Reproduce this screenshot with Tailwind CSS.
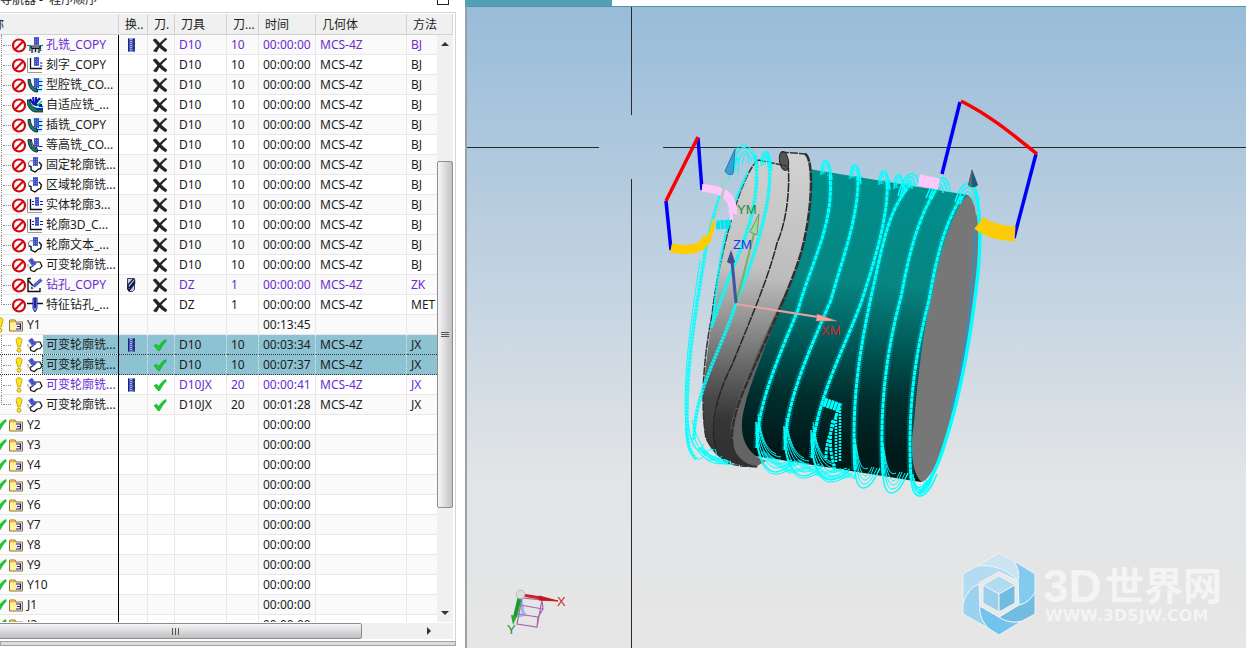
<!DOCTYPE html>
<html lang="zh-CN">

<head>
    <meta charset="UTF-8">
    <meta name="viewport" content="width=device-width, initial-scale=1.0">
    <title>工序导航器 - 程序顺序</title>
    <script src="https://cdn.jsdelivr.net/npm/@tailwindcss/browser@4"></script>
</head>

<body class="flex h-screen overflow-hidden bg-white font-['Noto_Sans','Noto_Sans_CJK_SC',sans-serif] text-xs text-[#1c1c1c]">

    <!-- icons -->
    <svg class="hidden">
        <symbol id="i-stop" viewBox="0 0 16 16">
            <circle cx="8" cy="8.500" r="6" fill="#fff" stroke="#cf0a10" stroke-width="2.200" />
            <path d="M4 12.500 12 4.500" stroke="#cf0a10" stroke-width="2.200" />
        </symbol>
        <symbol id="i-bang" viewBox="0 0 16 16">
            <path d="M8 .8c2.200 0 3.200 1.200 2.900 3L9.200 10H6.900L5.200 3.800C4.900 2 5.800 .8 8 .8z" fill="#ffe81a" stroke="#b79400" stroke-width=".8" />
            <circle cx="8" cy="13.300" r="2" fill="#ffe81a" stroke="#b79400" stroke-width=".8" />
        </symbol>
        <symbol id="i-check" viewBox="0 0 16 16">
            <path d="M2.200 8.600 4.600 7.200 6.800 9.800C8.500 6.600 10.600 4.200 13.800 2.600L14 4.400C11.300 7 9.300 10 7.600 13.600H6z" fill="#16cf2c" stroke="#0ca31c" stroke-width=".7" />
        </symbol>
        <symbol id="i-cross" viewBox="0 0 16 16">
            <path d="M1 3 3.500 1.800C7 5.500 10 9 15 13L13.500 15C8.500 12 5 8 1 3z" fill="#222" stroke="#222" stroke-width=".6" />
            <path d="M15 2C10.500 5.500 7 9.500 4.500 15L1.500 14C5 9 9 4.500 13.500 1.200z" fill="#222" stroke="#222" stroke-width=".6" />
        </symbol>
        <symbol id="i-mill" viewBox="0 0 16 16">
            <path d="M5 1.500h7v13H5z" fill="#4a5ab8" />
            <path d="M5.500 1.500v13" stroke="#1b2370" />
            <path d="M8 2v12" stroke="#9fb0f5" stroke-width="2" stroke-dasharray="1 1" />
            <path d="M11 1.500v13" stroke="#141b5c" stroke-width="1.500" stroke-dasharray="3 1" />
        </symbol>
        <symbol id="i-drill" viewBox="0 0 16 16">
            <path d="M4.500 1.500h7v11l-2 2h-3l-2-2z" fill="#c8cede" stroke="#3a4062" />
            <path d="M10.500 2 5 8v3.500l1 2 5.500-7V4.500L6 11" fill="none" stroke="#141c48" stroke-width="1.500" />
        </symbol>
        <symbol id="i-folder" viewBox="0 0 16 16">
            <path d="M1.500 3.500V14H14.500V5H8L7 3H2z" fill="#fff0a0" stroke="#8c7038" />
            <path d="M2 4h5l1 1.500H2z" fill="#eebb30" />
            <path d="M8 7h4.500v2.500H9m0 0h3.500V12H8" fill="none" stroke="#1016d8" stroke-width="1.200" />
        </symbol>
        <symbol id="i-cutter" viewBox="0 0 6 9" preserveAspectRatio="none">
            <path d="M0 0h6v9H0z" fill="#3c4cc0" />
            <path d="M1.500 0v9M4.500 0v9" stroke="#8fa0f5" stroke-dasharray="1 1" />
        </symbol>
        <symbol id="o-hole" viewBox="0 0 16 16">
            <use href="#i-cutter" x="7" y="0" width="5" height="8" />
            <path d="M0 8.500h3v5H2M16 8.500h-2.500v5h1" fill="none" stroke="#117777" stroke-width="1.200" />
            <path d="M5 16v-4.500h7V16M8.500 11v4M4 9h9v2H4z" fill="#d5ddf8" stroke="#111" stroke-width="1.200" />
        </symbol>
        <symbol id="o-text" viewBox="0 0 16 16">
            <path d="M.5 1v14.500H15" fill="none" stroke="#999" />
            <path d="M3.500 1v10.500H15" fill="none" stroke="#111" stroke-width="1.300" />
            <use href="#i-cutter" x="7" y="0" width="5" height="9" />
            <path d="M13 6h2.500M13 9h2.500" stroke="#1515e0" />
        </symbol>
        <symbol id="o-solid" viewBox="0 0 16 16">
            <path d="M.5 2v13.500H15" fill="none" stroke="#999" />
            <path d="M3.500 2v10.500H15" fill="none" stroke="#111" stroke-width="1.300" />
            <use href="#i-cutter" x="8" y="0" width="4" height="9" />
            <path d="M5 4.500h2M5 7.500h2M13 4.500h3M13 7.500h3" stroke="#1515e0" />
        </symbol>
        <symbol id="o-cavity" viewBox="0 0 16 16">
            <path d="M5 1h10v14H9z" fill="#a5ffff" />
            <path d="M1 2.500h2.500c0 5 2 8 7 9.500V15H9C4 14 1 9 1 2.500z" fill="#16776e" stroke="#111" stroke-width=".8" />
            <use href="#i-cutter" x="7" y="1" width="5" height="10" />
            <path d="M12 4.500h3.500M12 8.500h3.500M9 12.500h6" stroke="#1515e0" />
        </symbol>
        <symbol id="o-adaptive" viewBox="0 0 16 16">
            <path d="M8 6h8v8H8z" fill="#a5ffff" />
            <path d="M0 3h3c0 4 2 7 7 8.500h6V15H8C3 14 0 9 0 3z" fill="#16776e" stroke="#111" stroke-width=".8" />
            <path d="M3 2l4 6M6 0l1 6M9 0v8h6" fill="none" stroke="#0b12b8" stroke-width="2" />
            <path d="m7 8 6-7" stroke="#0b12b8" stroke-width="2.500" />
            <path d="m10 9 5-5" stroke="#12d52a" stroke-width="1.500" />
            <path d="M9 12.500h7M12 9.500h4" stroke="#1515ff" stroke-width="1.200" />
        </symbol>
        <symbol id="o-zlevel" viewBox="0 0 16 16">
            <path d="M1 2.500h2.500c0 5 2 8 7 9.500v3H9C4 14 1 9 1 2.500z" fill="#16776e" stroke="#111" stroke-width=".8" />
            <path d="M4.500 2.500c0 4 2 7.500 6 8.500" fill="none" stroke="#111" />
            <use href="#i-cutter" x="7" y="1" width="5" height="9" />
            <path d="M12 9.500h3.500M11 13.500h4" stroke="#1515e0" />
        </symbol>
        <symbol id="o-fixed" viewBox="0 0 16 16">
            <path d="M6 4C3 3 1 5 1.500 8L4 9.500v3.500l4 2 3.500-3 2-1 1-3.500L12 5" fill="#fff" stroke="#777" />
            <path d="M1.500 9 4 9.500v3.500l4 2 3.500-3h2l1-4L12 5" fill="none" stroke="#111" stroke-width="1.200" />
            <use href="#i-cutter" x="6" y="0" width="5" height="9" />
        </symbol>
        <symbol id="o-variable" viewBox="0 0 16 16">
            <path d="M8 5h5l2 4-2 2.500-3 .5-2.500 2.500-3.500-1-1-3 2-1z" fill="#fff" stroke="#111" stroke-width="1.200" />
            <g transform="rotate(-38 6 6)">
                <use href="#i-cutter" x="3.500" y="1" width="5" height="8" />
            </g>
            <path d="M1 7c-.5 2 .5 3.500 2 4" fill="none" stroke="#888" />
        </symbol>
        <symbol id="o-drill" viewBox="0 0 16 16">
            <path d="M1 1.500h3M1 1v13.500h12V11M1 3l5 6" fill="none" stroke="#111" stroke-width="1.400" />
            <path d="m6.500 9.500 8-7" stroke="#4555b8" stroke-width="3" />
            <path d="m6 10 8-8" stroke="#8fa0f5" stroke-dasharray="1 1" />
            <path d="m4 12 2.500-.5-2-2z" fill="#0c1590" />
        </symbol>
        <symbol id="o-feature" viewBox="0 0 16 16">
            <path d="M0 6.500h16" stroke="#111" stroke-width="1.500" />
            <path d="M6 1h4v10.500L8 15l-2-3.500z" fill="#8fa0f5" stroke="#1722b0" />
            <path d="M8 1v10" stroke="#1b278e" stroke-width="2" />
        </symbol>
    </svg>

    <!-- navigator -->
    <aside class="flex w-[456px] shrink-0 flex-col overflow-hidden">
        <header class="flex h-3 shrink-0 items-end justify-between overflow-hidden pr-[7px]">
            <h1 class="-ml-6 mb-1 whitespace-pre">工序导航器 -  程序顺序</h1>
            <button aria-label="最大化" class="mb-[7px] size-3 border border-[#222]"></button>
        </header>

        <div class="flex min-h-0 flex-1 flex-col border-t border-r border-[#d4d4d4] pt-px pr-0.5">
            <div class="relative min-h-0 flex-1 overflow-hidden">
                <table class="w-full table-fixed border-separate border-spacing-0">
                    <colgroup>
                        <col class="w-[119px]">
                        <col class="w-[29px]">
                        <col class="w-[27px]">
                        <col class="w-[52px]">
                        <col class="w-8">
                        <col class="w-[57px]">
                        <col class="w-[91px]">
                        <col>
                    </colgroup>
                    <thead>
                        <tr class="h-[21px] bg-[#f0f0f0] text-left whitespace-nowrap *:border-r *:border-b *:border-[#d2d2d2] *:pt-0.5 *:pb-0 *:font-normal *:leading-[18px]">
                            <th><span class="-ml-5">名称</span></th>
                            <th class="pl-1.5">换..</th>
                            <th class="pl-1.5">刀.</th>
                            <th class="pl-1.5">刀具</th>
                            <th class="pl-1.5">刀...</th>
                            <th class="pl-1.5">时间</th>
                            <th class="pl-1.5">几何体</th>
                            <th class="pl-1.5">方法</th>
                        </tr>
                    </thead>
                    <tbody id="rows"></tbody>
                </table>

                <!-- frozen column edge -->
                <div class="absolute top-[21px] bottom-0 left-[118px] w-px bg-black"></div>

                <div class="absolute top-[21px] right-0 bottom-0 flex w-4 flex-col bg-[#f0f0f0]">
                    <button aria-label="向上" class="flex h-[18px] items-center justify-center">
                        <svg class="size-2" viewBox="0 0 8 8"><path d="M0 6h8L4 2z" fill="#333" /></svg>
                    </button>
                    <div class="grow-[110]"></div>
                    <div class="flex grow-[347] flex-col items-center justify-center gap-px rounded-xs border border-[#8e8e8e] bg-gradient-to-r from-[#f6f6f6] to-[#c2c2c6]">
                        <i class="h-px w-2 bg-[#555]"></i>
                        <i class="h-px w-2 bg-[#555]"></i>
                        <i class="h-px w-2 bg-[#555]"></i>
                    </div>
                    <div class="grow-[98]"></div>
                    <button aria-label="向下" class="flex h-[18px] items-center justify-center">
                        <svg class="size-2" viewBox="0 0 8 8"><path d="M0 2h8L4 6z" fill="#333" /></svg>
                    </button>
                </div>
            </div>

            <div class="mt-px mb-0.5 flex h-4 shrink-0 bg-[#f0f0f0]">
                <div class="-ml-3 flex grow-[374] items-center justify-center gap-0.5 rounded-r-xs border border-[#8e8e8e] bg-gradient-to-b from-[#f6f6f6] to-[#bfbfc4]">
                    <i class="h-[7px] w-px bg-[#555]"></i>
                    <i class="h-[7px] w-px bg-[#555]"></i>
                    <i class="h-[7px] w-px bg-[#555]"></i>
                </div>
                <div class="grow-[60]"></div>
                <button aria-label="向右" class="mr-4 flex w-4 items-center justify-center">
                    <svg class="size-2" viewBox="0 0 8 8"><path d="M2 0v8l4-4z" fill="#333" /></svg>
                </button>
            </div>
        </div>
        <div class="mb-0.5 h-[5px] shrink-0 border border-[#a2a2a2] bg-[#dcdcdc]"></div>
    </aside>

    <!-- graphics window -->
    <main class="ml-[9px] flex min-w-0 flex-1 flex-col">
        <div class="h-1.5 w-[147px] shrink-0 bg-[#539fb3]"></div>
        <div class="min-h-0 flex-1 border-t border-l-2 border-t-[#4f93a8] border-l-[#9aa0a5] bg-linear-[180deg,#98bcd9_0%,#c6d5e2_46%,#e2e4e6_73%,#e6e6e6_100%]">
            <svg class="block size-full" viewBox="467 7 779 641" preserveAspectRatio="xMidYMid slice" fill="none">
                <defs>
                    <linearGradient id="teal" gradientUnits="userSpaceOnUse" x1="860" y1="170" x2="840" y2="450">
                        <stop offset="0" stop-color="#00908d" />
                        <stop offset=".4" stop-color="#078582" />
                        <stop offset=".6" stop-color="#005d5b" />
                        <stop offset=".82" stop-color="#002e2d" />
                        <stop offset="1" stop-color="#001a1a" />
                    </linearGradient>
                    <linearGradient id="steel" gradientUnits="userSpaceOnUse" x1="0" y1="160" x2="0" y2="465">
                        <stop offset="0" stop-color="#cfcfcf" />
                        <stop offset=".35" stop-color="#c2c2c2" />
                        <stop offset=".55" stop-color="#8c8c8c" />
                        <stop offset=".78" stop-color="#484848" />
                        <stop offset="1" stop-color="#303030" />
                    </linearGradient>
                    <linearGradient id="rim" gradientUnits="userSpaceOnUse" x1="0" y1="155" x2="0" y2="465">
                        <stop offset="0" stop-color="#d2d2d2" />
                        <stop offset=".4" stop-color="#bcbcbc" />
                        <stop offset=".7" stop-color="#626262" />
                        <stop offset=".85" stop-color="#363636" />
                        <stop offset="1" stop-color="#303030" />
                    </linearGradient>
                    <g id="crest" stroke="#00ffff">
                        <path d="M-5 15C-5-5 4-5 6 20M-3 14C-3-1 3-2 4 18" stroke-width="1.300" />
                        <path d="M-4 12C-3-4 4-4 5 14M-1 14C-1 2 2 2 2 16" stroke-dasharray="2 1" opacity=".8" />
                    </g>
                    <g id="fan" stroke="#00ffff">
                        <path d="M0-10C0 22 8 40 20 40 27 39 33 35 38 31" stroke-width="1.500" />
                        <path d="M1-6C2 20 11 37 22 36 29 35 34 31 39 29M1-8C4 16 12 33 24 32L36 28M2-10C5 13 13 29 25 28M2-14C5 8 11 24 25 25M2-18C5 3 9 17 20 22M0 0C1 26 8 44 22 42 31 40 36 36 42 32" />
                    </g>
                    <g id="small-fan" stroke="#00ffff">
                        <path d="M0-6C0 20 1 38 9 38 17 38 21 28 26 18" stroke-width="1.500" />
                        <path d="M1-2C2 22 5 34 10 34 16 34 19 26 23 18M1-6C3 18 6 30 11 30 15 30 17 24 20 17M1-9C4 14 7 26 12 26 14 25 16 21 18 17M1-12C4 10 7 22 14 18" />
                    </g>
                    <g id="bands">
                        <path d="M830 175C834 225 812 260 798 310 772 372 757 410 757 448" />
                        <path d="M858 176C859 218 841 262 831 300 807 356 785 404 785 450" />
                        <path d="M887 180C890 218 868 280 862 300 845 348 814 402 812 458" />
                        <path d="M911 184C888 210 884 240 871 297 860 350 851 400 855 470" />
                        <path d="M938 186C916 220 908 260 901 297 886 352 879 410 883 476" />
                        <path d="M962 196C944 224 936 260 929 300 915 355 907 410 911 480" />
                    </g>
                </defs>

                <!-- crosshair -->
                <path d="M631.500 7v108M631.500 179v469M467 147.500h132M663 147.500h583" stroke="#2a2a2e" />

                <!-- part -->
                <path d="M809 169 968 195 930 470 921 482 755 456C738 448 738 415 746 395 760 345 785 300 797 267 808 235 813 200 809 169z" fill="url(#teal)" />
                <path d="M968 195C979 203 983 245 975 290 970 330 963 375 952 417 943 450 933 478 922 482 911 474 910 445 914 423 917 380 924 325 934 280 943 240 957 203 968 195z" fill="#777" />
                <path d="M758 160C768 160 778 164 786 166L800 200 770 300 725 400 724 460C710 452 705 440 704 425 701 390 708 350 713 310 716 280 724 240 733 213 740 188 748 166 758 160z" fill="url(#steel)" />
                <path d="M782 152 804 154C812 158 814 195 805 235 798 267 780 310 760 353 742 390 735 430 741 448 745 460 756 464 758 467 745 467 728 464 719 455 710 445 713 423 724 387 732 365 752 320 764 290 776 250 790 205 788 170z" fill="url(#rim)" />
                <path d="M800 262C775 315 738 388 731 425 729 450 740 464 757 466L766 461C742 452 738 430 745 405 752 375 785 300 800 262z" fill="#646464" />
                <path d="M788 163C791 200 783 230 777 243 768 280 748 325 732 365 714 400 708 435 719 455" stroke="#252525" stroke-width="1.500" stroke-dasharray="9 1" />
                <ellipse cx="784" cy="161" rx="4.500" ry="9.500" transform="rotate(-10 784 161)" fill="#555" stroke="#222" />
                <path d="M805 154C814 158 813 210 801 253 790 290 763 345 747 383 732 415 725 450 741 462" stroke="#303030" stroke-width="2.500" stroke-dasharray="9 1" />
                <path d="M758 160C740 175 718 260 712 315 702 365 701 410 706 438 710 447 718 452 724 461 735 467 750 466 757 467M758 160 787 166M781 152 806 154" stroke="#333" stroke-width="1.500" stroke-dasharray="8 1" />

                <!-- tool paths on the drum -->
                <use href="#bands" stroke="#00b8b6" stroke-width="7" stroke-dasharray="1 1" opacity=".6" />
                <use href="#bands" stroke="#00ffff" stroke-width="3" stroke-dasharray="5 .5" />
                <use href="#crest" x="826" y="160" />
                <use href="#crest" x="855" y="164" />
                <use href="#crest" x="884" y="170" />
                <use href="#crest" x="899" y="174" />
                <use href="#fan" x="756" y="432" />
                <use href="#fan" x="784" y="436" />
                <use href="#fan" x="811" y="440" />
                <use href="#small-fan" x="854" y="450" />
                <use href="#small-fan" x="882" y="455" />
                <path d="M762 452 782 466 800 462 818 474 840 470 856 478M766 458 790 472 808 468 826 478 850 476" stroke="#00ffff" stroke-width="4" opacity=".6" />
                <g stroke="#00ffff">
                    <path d="M898 196C905 168 917 168 919 186M900 197C907 172 914 172 915 187M902 198C909 176 912 176 912 189M926 198C936 172 948 172 950 192M929 198C938 175 945 176 947 192M932 199C939 180 942 180 943 193M955 202C962 178 974 178 979 200M957 203C964 182 972 183 976 200M960 204C966 188 970 187 974 204" stroke-width="1.500" />
                    <path d="M911 470C910 504 925 504 937 474M913 474C913 498 924 500 933 476M914 478C915 494 923 494 930 478M914 482C917 490 922 489 927 480" stroke-width="1.500" />
                    <path d="M974 185C983 215 980 262 976 290 970 340 962 382 952 419 942 455 934 479 919 494" stroke-width="3.500" />
                    <path d="M838 409C833 430 826 437 826 460M833 420C828 440 831 455 835 470" stroke-width="3" stroke-dasharray="3 1" />
                    <path d="M836 415V462M840 408V462" stroke-width="2.500" stroke-dasharray="2 1" />
                    <path d="m824 402 17 6" stroke-width="9" stroke-dasharray="3 .5" />
                </g>
                <path d="M975 230C973 300 965 360 951 412" stroke="#2694d0" stroke-width="1.500" />

                <!-- tool paths on the flange -->
                <g stroke="#00ffff" stroke-width="3.500" stroke-dasharray="3 .5" opacity=".9">
                    <path d="M738 158C718 190 710 230 705 253 697 305 686 360 687 425 687 445 690 452 696 459" />
                    <path d="M767 155C776 185 761 240 737 300 722 350 694 390 694 440" />
                    <path d="M755 155C762 200 745 240 728 280L711 328" />
                    <path d="M748 172C727 215 720 250 713 320" stroke-width="2.500" />
                </g>
                <g stroke="#00ffff">
                    <path d="M732 172C730 138 752 138 757 162M735 172C734 142 750 142 755 162M738 174C738 147 748 146 752 162M742 165C744 150 748 150 749 164M728 180C734 140 749 138 759 168" />
                    <path d="M700 260C693 310 682 370 686 430 687 448 692 460 700 459 708 455 707 447 714 450M688 420C691 450 697 455 704 444M692 420C700 455 718 463 722 456M690 435C700 463 718 468 731 461M695 440C704 459 720 466 734 464M698 450C710 468 720 459 715 449" />
                    <path d="M700 448C708 458 718 460 728 462" stroke-width="4" opacity=".8" />
                </g>
                <use href="#crest" x="766" y="151" />
                <path d="m716 225 15-1" stroke="#00e5ee" stroke-width="9" stroke-dasharray="4 .5" />

                <!-- approach and retract moves -->
                <path d="m698 138 4 52M666 201l5 49M960 102l-18 72M1036 154l-22 84" stroke="#0000fa" stroke-width="3.500" />
                <path d="m698 137-32 64M961 101c28 14 50 32 76 53" stroke="#fa0000" stroke-width="3.500" />
                <path d="M702 188c18 1 32 6 31 26" stroke="#ffc8fa" stroke-width="8" />
                <path d="M733 204l-2 16" stroke="#ffc8fa" stroke-width="4" />
                <path d="m919 180 20 4" stroke="#ffc8fa" stroke-width="11" />
                <path d="M671 248c22 4 32 0 37-11" stroke="#ffcc00" stroke-width="9" />
                <path d="M707 240c5-6 6-13 7-20" stroke="#ffcc00" stroke-width="4" />
                <path d="M979 223c10 8 22 10 36 11" stroke="#ffcc00" stroke-width="15" />
                <path d="M981 219c10 8 22 10 34 11M981 225c10 8 22 10 33 11" stroke="#e8c850" stroke-dasharray="5 1" />
                <path d="m728 173-13 50" stroke="#bfc9c9" stroke-width="3" />
                <path d="m735 149-10 22c2 4 6 4 8 3z" fill="#3aa0d4" stroke="#207fae" />
                <path d="m972 185 5 30" stroke="#aabcc2" stroke-width="2" />
                <path d="m972 169-4 16c3 3 7 3 10 0z" fill="#1f5c78" />
                <path d="M972 169v18l-4-2z" fill="#536b75" />

                <!-- machine coordinate system -->
                <path d="m736 304 19-74" stroke="#7cae6a" stroke-width="2" />
                <path d="m759 214-9 18 7 3z" fill="#9ed89a" stroke="#4a8b48" stroke-width=".7" />
                <path d="m736 303-4-42" stroke="#3f559e" stroke-width="3" />
                <path d="m731 250-4 12c3 2 6 2 8 0z" fill="#3a4f92" />
                <path d="m736 304 82 13" stroke="#e5a3a3" stroke-width="2" />
                <path d="m837 321-20-7-1 7z" fill="#f3a5a0" stroke="#bf6a68" stroke-width=".5" />
                <g class="font-['Liberation_Sans',sans-serif] text-[13px]">
                    <text x="737" y="214" fill="#268a31">YM</text>
                    <text x="733" y="249" fill="#083cf0">ZM</text>
                    <text x="821" y="335" fill="#d3262b">XM</text>
                </g>

                <!-- view triad -->
                <path d="m522 598 20 2-5 27-20-3zM520 605l23 4M518 614l20 3M542 600l1 9-5 8-1 10" stroke="#a764ac" stroke-width="1.200" />
                <path d="m521 600 2 13m-5 3 8-2" stroke="#7890df" stroke-width="3" opacity=".6" />
                <path d="m520 596-5 21" stroke="#199b28" stroke-width="4" />
                <path d="m511 615 6 1-4 9z" fill="#20ae30" />
                <path d="m522 595 19 3" stroke="#d51d24" stroke-width="3" />
                <path d="m539 596 19 5-19-1z" fill="#c6161d" stroke="#c6161d" />
                <circle cx="520.500" cy="594.500" r="4.300" fill="#dedede" stroke="#b9b9b9" />
                <g class="font-['Liberation_Sans',sans-serif] text-[13px]">
                    <text x="557" y="606" fill="#d3262b">X</text>
                    <text x="507" y="634" fill="#268a31">Y</text>
                </g>

                <!-- watermark -->
                <g stroke="#edf3f6">
                    <path d="M977 566 999 553 1014 561C1018 568 1020 574 1018 581 1008 570 993 564 977 566z" fill="#cce4f1" />
                    <path d="M963 574 977 566C993 564 1008 570 1018 581L999 572 979 584C971 587 966 594 963 604z" fill="#b3dbf1" />
                    <path d="M963 604C966 594 971 587 979 584L980 606C979 615 983 622 988 628L963 614z" fill="#9bd2ef" />
                    <path d="M980 606 999 617C1006 622 1014 623 1022 621L999 635 988 628C983 622 979 615 980 606z" fill="#71c5ed" />
                    <path d="M999 617 1019 605C1027 603 1032 598 1035 592V614L1022 621C1014 623 1006 622 999 617z" fill="#72bce2" />
                    <path d="M1014 561 1035 574V592C1032 598 1027 603 1019 605L1018 581C1020 574 1018 568 1014 561z" fill="#83cbee" />
                    <path d="m999 572 19 10v23l-19 12-19-11v-24z" fill="#e8e8e8" />
                    <path d="m983 585 16-9 16 9-16 9z" fill="#b1dbf0" />
                    <path d="M983 585v18l16 9v-18z" fill="#99cfea" />
                    <path d="M1015 585v18l-16 9v-18z" fill="#70bce2" />
                </g>
                <g fill="#f4f4f4">
                    <text x="1043" y="602" class="font-['Liberation_Sans',sans-serif] text-[46px] font-bold">3D</text>
                    <text x="1105" y="600" class="font-['Noto_Sans_CJK_SC',sans-serif] text-[39px] font-bold">世界网</text>
                    <text x="1045" y="621" class="font-['DejaVu_Sans',sans-serif] text-base font-bold">WWW.3DSJW.COM</text>
                </g>
            </svg>
        </div>
    </main>

    <script>
        // op, name, tool change icon, tool, number, time, method
        let operations = [
            ["hole", "孔铣_COPY", "mill", "D10", "10", "00:00:00", "BJ"],
            ["text", "刻字_COPY", "", "D10", "10", "00:00:00", "BJ"],
            ["cavity", "型腔铣_CO...", "", "D10", "10", "00:00:00", "BJ"],
            ["adaptive", "自适应铣_...", "", "D10", "10", "00:00:00", "BJ"],
            ["cavity", "插铣_COPY", "", "D10", "10", "00:00:00", "BJ"],
            ["zlevel", "等高铣_CO...", "", "D10", "10", "00:00:00", "BJ"],
            ["fixed", "固定轮廓铣...", "", "D10", "10", "00:00:00", "BJ"],
            ["fixed", "区域轮廓铣...", "", "D10", "10", "00:00:00", "BJ"],
            ["solid", "实体轮廓3...", "", "D10", "10", "00:00:00", "BJ"],
            ["solid", "轮廓3D_C...", "", "D10", "10", "00:00:00", "BJ"],
            ["fixed", "轮廓文本_...", "", "D10", "10", "00:00:00", "BJ"],
            ["variable", "可变轮廓铣...", "", "D10", "10", "00:00:00", "BJ"],
            ["drill", "钻孔_COPY", "drill", "DZ", "1", "00:00:00", "ZK"],
            ["feature", "特征钻孔_...", "", "DZ", "1", "00:00:00", "MET"],
        ]
        let finished = [
            ["variable", "可变轮廓铣...", "mill", "D10", "10", "00:03:34", "JX"],
            ["variable", "可变轮廓铣...", "", "D10", "10", "00:07:37", "JX"],
            ["variable", "可变轮廓铣...", "mill", "D10JX", "20", "00:00:41", "JX"],
            ["variable", "可变轮廓铣...", "", "D10JX", "20", "00:01:28", "JX"],
        ]
        let groups = ["Y2", "Y3", "Y4", "Y5", "Y6", "Y7", "Y8", "Y9", "Y10", "J1", "J2"]

        let rows = document.querySelector("#rows")
        let rowClass = "h-5 whitespace-nowrap leading-[19px] even:bg-white odd:bg-[#fafafa] *:overflow-hidden *:border-r *:border-b *:border-[#e8e8e8] *:p-0 "

        function icon(name, size) {
            return name ? `<svg class="${size} shrink-0"><use href="#${name}"/></svg>` : ""
        }

        function addOperation(op, done, index, last) {
            let [kind, name, change, tool, number, time, method] = op
            let purple = change && !(done && index == 0)
            let selected = done && index < 2
            let color = purple ? "text-[#6a2bd0]" : "text-[#1c1c1c]"
            let fill = selected ? "bg-[#8cc2d1]" : ""
            let line = selected ? "border-b border-dotted !border-b-[#333]" : ""
            rows.innerHTML += `<tr class="${rowClass} ${color}">
                <td class="${line}">
                    <div class="flex h-[19px] items-center">
                        <span class="ml-px flex ${last ? "h-2.5 self-start" : "h-5"} w-2.5 shrink-0 border-l border-dotted border-[#888]"><i class="${last ? "mt-[9px]" : "mt-2.5"} ml-px h-px w-2 border-t border-dotted border-[#888]"></i></span>
                        ${icon(done ? "i-bang" : "i-stop", "size-4")}
                        ${icon("o-" + kind, "size-4")}
                        <span class="h-5 flex-1 pl-[3px] ${fill} ${done && index == 1 ? "border-l border-dotted border-[#333] -ml-px" : ""}">${name}</span>
                    </div>
                </td>
                <td class="${fill} ${line}"><div class="ml-1">${icon("i-" + change, change ? "size-4" : "hidden")}</div></td>
                <td class="${fill} ${line}"><div class="ml-1">${icon(done ? "i-check" : "i-cross", "size-4")}</div></td>
                <td class="${fill} ${line}"><span class="ml-1">${tool}</span></td>
                <td class="${fill} ${line}"><span class="ml-1">${number}</span></td>
                <td class="${fill} ${line}"><span class="ml-1">${time}</span></td>
                <td class="${fill} ${line}"><span class="ml-1">MCS-4Z</span></td>
                <td class="${fill} ${line}"><span class="ml-1">${method}</span></td>
            </tr>`
        }

        function addGroup(name, time, state) {
            rows.innerHTML += `<tr class="${rowClass}">
                <td>
                    <div class="-ml-2 flex h-[19px] items-center">
                        ${icon(state, "size-4")}
                        ${icon("i-folder", "size-4")}
                        <span class="ml-[3px]">${name}</span>
                    </div>
                </td>
                <td></td><td></td><td></td><td></td>
                <td><span class="ml-1">${time}</span></td>
                <td></td><td></td>
            </tr>`
        }

        operations.forEach((op, i) => addOperation(op, false, i, i == operations.length - 1))
        addGroup("Y1", "00:13:45", "i-bang")
        finished.forEach((op, i) => addOperation(op, true, i, i == finished.length - 1))
        groups.forEach((name) => addGroup(name, "00:00:00", "i-check"))
    </script>
</body>

</html>
